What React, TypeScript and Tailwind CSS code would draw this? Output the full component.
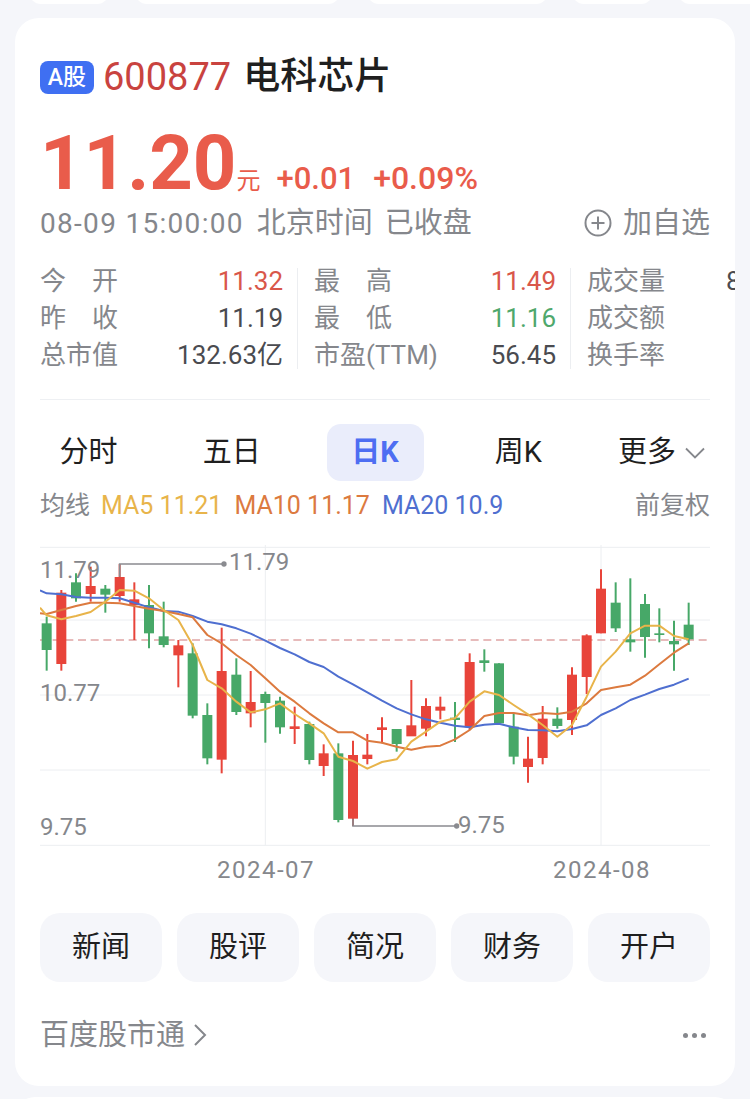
import React from 'react';

const FONT = 'font-[Roboto,"Noto_Sans_CJK_SC",sans-serif]';

type Candle = [number, number, number, number, number, 'r' | 'g'];

// coordinates are 3x chart pixels, x = (px - 20) * 3, y = (py - 530) * 3
const candles: Candle[] = [
    [80, 260, 422, 280, 360, 'g'],
    [124, 180, 422, 188, 402, 'r'],
    [168, 130, 215, 157, 205, 'g'],
    [212, 110, 215, 168, 192, 'r'],
    [256, 165, 248, 176, 194, 'g'],
    [299, 102, 215, 141, 198, 'r'],
    [343, 157, 330, 208, 225, 'r'],
    [387, 165, 355, 225, 310, 'g'],
    [431, 215, 352, 319, 345, 'g'],
    [475, 330, 472, 346, 376, 'r'],
    [518, 340, 565, 370, 557, 'g'],
    [562, 520, 703, 555, 685, 'g'],
    [605, 293, 730, 423, 689, 'r'],
    [649, 385, 555, 434, 546, 'g'],
    [692, 423, 592, 516, 550, 'r'],
    [736, 485, 638, 492, 519, 'g'],
    [780, 500, 611, 512, 592, 'g'],
    [824, 530, 642, 589, 597, 'r'],
    [868, 575, 703, 582, 690, 'g'],
    [911, 643, 738, 670, 708, 'r'],
    [955, 640, 877, 670, 870, 'g'],
    [999, 632, 888, 675, 866, 'r'],
    [1042, 612, 703, 674, 687, 'r'],
    [1086, 562, 640, 592, 600, 'r'],
    [1130, 597, 665, 597, 642, 'g'],
    [1174, 450, 618, 586, 619, 'r'],
    [1218, 505, 619, 528, 596, 'r'],
    [1261, 500, 568, 530, 542, 'r'],
    [1305, 516, 636, 563, 570, 'g'],
    [1349, 370, 600, 396, 592, 'r'],
    [1393, 358, 425, 391, 399, 'g'],
    [1437, 400, 585, 400, 580, 'g'],
    [1481, 552, 703, 590, 680, 'g'],
    [1524, 620, 758, 686, 711, 'r'],
    [1568, 528, 703, 566, 684, 'r'],
    [1612, 532, 596, 566, 588, 'g'],
    [1656, 412, 615, 434, 570, 'r'],
    [1700, 313, 492, 316, 441, 'r'],
    [1743, 118, 310, 176, 310, 'r'],
    [1787, 157, 306, 218, 295, 'g'],
    [1831, 145, 365, 328, 337, 'g'],
    [1875, 192, 383, 222, 321, 'g'],
    [1918, 235, 337, 310, 315, 'g'],
    [1962, 272, 422, 333, 343, 'g'],
    [2006, 218, 345, 284, 328, 'g'],
];

const ma20 = '60,181 80,190 124,193 168,201 212,203 256,203 299,205 343,218 387,232 431,243 475,245 518,258 562,275 605,283 649,295 692,311 736,332 780,354 824,373 868,396 911,411 955,440 999,463 1042,487 1086,512 1130,535 1174,553 1218,568 1261,578 1305,587 1349,592 1393,584 1437,581 1481,592 1524,600 1568,601 1612,604 1656,597 1700,586 1743,555 1787,535 1831,510 1875,494 1918,477 1962,464 2006,446';
const ma10 = '60,250 80,252 124,240 168,228 212,218 256,218 299,220 343,228 387,236 431,243 475,252 518,262 562,315 605,340 649,375 692,405 736,445 780,485 824,515 868,550 911,580 955,607 999,607 1042,632 1086,638 1130,650 1174,659 1218,650 1261,647 1305,628 1349,600 1393,558 1437,549 1481,549 1524,556 1568,549 1612,552 1656,545 1700,520 1743,480 1787,472 1831,464 1875,437 1918,403 1962,368 2006,340';
const ma5 = '60,233 80,256 124,268 168,258 212,246 256,215 299,180 343,182 387,205 431,240 475,270 518,345 562,450 605,475 649,515 692,547 736,538 780,520 824,552 868,580 911,610 955,680 999,693 1042,716 1086,696 1130,688 1174,635 1218,605 1261,575 1305,565 1349,515 1393,484 1437,495 1481,525 1524,553 1568,585 1612,620 1656,585 1700,500 1743,410 1787,365 1831,310 1875,287 1918,287 1962,318 2006,328';

const col1 = [
    { label: ['今', '开'], value: '11.32', color: 'text-[#d9574a]' },
    { label: ['昨', '收'], value: '11.19', color: 'text-[#4a4b50]' },
    { label: ['总市值'], value: '132.63亿', color: 'text-[#4a4b50]' },
];
const col2 = [
    { label: ['最', '高'], value: '11.49', color: 'text-[#d9574a]' },
    { label: ['最', '低'], value: '11.16', color: 'text-[#4fa86c]' },
    { label: ['市盈(TTM)'], value: '56.45', color: 'text-[#4a4b50]' },
];

const StatLabel: React.FC<{ parts: string[] }> = ({ parts }) => (
    <span className="flex justify-between min-w-[78px] text-[#85878c]">
        {parts.map(p => <span key={p}>{p}</span>)}
    </span>
);

const StatRow: React.FC<{ row: typeof col1[number] }> = ({ row }) => (
    <div className="flex justify-between">
        <StatLabel parts={row.label} />
        <span className={row.color}>{row.value}</span>
    </div>
);

const KChart: React.FC = () => (
    <div className="relative mt-[24px] h-[339px]">
        <svg className="block" width="670" height="303" viewBox="60 45 2010 909" fill="none">
            {[52, 270, 495, 720, 946].map(y => (
                <line key={y} x1="60" x2="2070" y1={y} y2={y} stroke="#eceef1" strokeWidth="3" />
            ))}
            {[736, 1743].map(x => (
                <line key={x} x1={x} x2={x} y1="45" y2="946" stroke="#eceef1" strokeWidth="3" />
            ))}
            <line x1="60" x2="2070" y1="330" y2="330" stroke="#dfa5a5" strokeWidth="4" strokeDasharray="24 14" />
            {candles.map(([x, wt, wb, bt, bb, c]) => (
                <g key={x} fill={c === 'r' ? '#e8443a' : '#47a868'} stroke={c === 'r' ? '#e8443a' : '#47a868'}>
                    <line x1={x} x2={x} y1={wt} y2={wb} strokeWidth="6" />
                    <rect x={x - 15} y={bt} width="30" height={bb - bt} stroke="none" />
                </g>
            ))}
            <polyline points={ma20} stroke="#4f6fd0" strokeWidth="6" strokeLinejoin="round" />
            <polyline points={ma10} stroke="#dc7a3f" strokeWidth="6" strokeLinejoin="round" />
            <polyline points={ma5} stroke="#e8b44a" strokeWidth="6" strokeLinejoin="round" />
            <polyline points="299,140 299,102 612,102" stroke="#8a8b90" strokeWidth="5" />
            <circle cx="612" cy="102" r="8" fill="#8a8b90" />
            <polyline points="999,866 999,888 1310,888" stroke="#8a8b90" strokeWidth="5" />
            <circle cx="1310" cy="888" r="8" fill="#8a8b90" />
        </svg>
        <span className="absolute left-0 top-[10px] text-[24px] leading-[30px] text-[#85878c]">11.79</span>
        <span className="absolute left-0 top-[133px] text-[24px] leading-[30px] text-[#85878c]">10.77</span>
        <span className="absolute left-0 top-[267px] text-[24px] leading-[30px] text-[#85878c]">9.75</span>
        <span className="absolute left-[189px] top-[2px] text-[24px] leading-[30px] text-[#85878c]">11.79</span>
        <span className="absolute left-[418px] top-[265px] text-[24px] leading-[30px] text-[#85878c]">9.75</span>
        <span className="absolute left-[177px] top-[311px] text-[24px] leading-[28px] tracking-[1.5px] text-[#85878c]">2024-07</span>
        <span className="absolute left-[513px] top-[311px] text-[24px] leading-[28px] tracking-[1.5px] text-[#85878c]">2024-08</span>
    </div>
);

const App: React.FC = () => {
    return (
        <div className={`w-[750px] h-[1099px] overflow-hidden bg-[#f5f6fa] ${FONT}`}>
            <div className="flex items-end h-[4px]">
                <div className="ml-[29px] w-[80px] h-[14px] shrink-0 bg-white rounded-b-[12px]" />
                <div className="ml-[26px] w-[205px] h-[14px] shrink-0 bg-white rounded-b-[12px]" />
                <div className="ml-[27px] w-[181px] h-[14px] shrink-0 bg-white rounded-b-[12px]" />
                <div className="ml-[24px] w-[81px] h-[14px] shrink-0 bg-white rounded-b-[12px]" />
                <div className="ml-[25px] flex-1 h-[14px] bg-white rounded-bl-[12px]" />
            </div>

            <div className="mt-[14px] mx-[15px] h-[1068px] bg-white rounded-[24px] overflow-hidden px-[25px] pt-[39px]">
                <div className="flex items-center h-[40px] whitespace-nowrap">
                    <span className="flex items-center justify-center w-[54px] h-[33px] rounded-[8px] bg-[#3f6ff2] text-white text-[23px] font-medium leading-none">A股</span>
                    <span className="ml-[9px] text-[38px] leading-[40px] text-[#c9433f]">600877</span>
                    <span className="ml-[12px] text-[37px] leading-[40px] font-medium text-[#1f1f1f]">电科芯片</span>
                </div>

                <div className="mt-[29px] flex items-baseline h-[74px] whitespace-nowrap text-[#e95c4b]">
                    <span className="text-[76px] leading-[74px] font-bold">11.20</span>
                    <span className="text-[24px] leading-[28px]">元</span>
                    <span className="ml-[16px] text-[31px] leading-[34px] font-medium">+0.01</span>
                    <span className="ml-[18px] text-[32px] leading-[34px] font-medium">+0.09%</span>
                </div>

                <div className="mt-[3px] flex items-center justify-between h-[40px] text-[29px] leading-[40px] text-[#85878c] whitespace-nowrap">
                    <div>
                        <span className="text-[28px] tracking-[1.3px]">08-09 15:00:00</span>
                        <span className="ml-[13px]">北京时间</span>
                        <span className="ml-[12px]">已收盘</span>
                    </div>
                    <div className="flex items-center">
                        <svg width="28" height="28" viewBox="0 0 28 28" fill="none" stroke="#85878c" strokeWidth="2">
                            <circle cx="14" cy="14" r="12.5" />
                            <path d="M14 7.5v13M7.5 14h13" />
                        </svg>
                        <span className="ml-[11px]">加自选</span>
                    </div>
                </div>

                <div className="mt-[20px] flex text-[26px] leading-[37px] whitespace-nowrap">
                    <div className="w-[243px] shrink-0">
                        {col1.map(row => <StatRow key={row.value} row={row} />)}
                    </div>
                    <div className="ml-[14px] mr-[16px] my-[5px] w-px shrink-0 bg-[#eceef1]" />
                    <div className="w-[242px] shrink-0">
                        {col2.map(row => <StatRow key={row.value} row={row} />)}
                    </div>
                    <div className="ml-[14px] mr-[16px] my-[5px] w-px shrink-0 bg-[#eceef1]" />
                    <div className="w-[243px] shrink-0">
                        <div className="flex justify-between">
                            <StatLabel parts={['成交量']} />
                            <span className="w-[104px] text-[#4a4b50]">8</span>
                        </div>
                        <StatLabel parts={['成交额']} />
                        <StatLabel parts={['换手率']} />
                    </div>
                </div>

                <div className="mt-[25px] h-px bg-[#eef0f3]" />

                <div className="mt-[24px] flex justify-between text-[29px] text-[#1f1f1f] whitespace-nowrap">
                    <div className="flex items-center justify-center w-[97px] h-[57px]">分时</div>
                    <div className="flex items-center justify-center w-[97px] h-[57px]">五日</div>
                    <div className="flex items-center justify-center w-[97px] h-[57px] rounded-[14px] bg-[#eaedfb] font-bold text-[#4e6ef2]">日K</div>
                    <div className="flex items-center justify-center w-[97px] h-[57px]">周K</div>
                    <div className="flex items-center justify-center w-[97px] h-[57px]">
                        更多
                        <svg className="ml-[9px]" width="20" height="12" viewBox="0 0 20 12" fill="none" stroke="#85878c" strokeWidth="1.8">
                            <path d="M1 1.5l9 9 9-9" />
                        </svg>
                    </div>
                </div>

                <div className="mt-[10px] flex items-center h-[30px] text-[25px] leading-[30px] whitespace-nowrap">
                    <span className="text-[#85878c]">均线</span>
                    <span className="ml-[11px] text-[#e8b44a]">MA5 11.21</span>
                    <span className="ml-[12px] text-[#dc7a3f]">MA10 11.17</span>
                    <span className="ml-[12px] text-[#4f6fd0]">MA20 10.9</span>
                    <span className="ml-auto text-[#85878c]">前复权</span>
                </div>

                <KChart />

                <div className="mt-[29px] flex gap-[15px]">
                    {['新闻', '股评', '简况', '财务', '开户'].map(t => (
                        <div key={t} className="flex-1 flex items-center justify-center h-[69px] rounded-[20px] bg-[#f5f6fa] text-[29px] text-[#1f1f1f]">{t}</div>
                    ))}
                </div>

                <div className="mt-[33px] flex items-center justify-between h-[40px] text-[#85878c]">
                    <div className="flex items-center">
                        <span className="text-[29px] leading-[40px]">百度股市通</span>
                        <svg className="ml-[8px]" width="14" height="24" viewBox="0 0 14 24" fill="none" stroke="#85878c" strokeWidth="2">
                            <path d="M2 2l10 10L2 22" />
                        </svg>
                    </div>
                    <div className="flex gap-[4px] mr-[4px]">
                        <span className="w-[5px] h-[5px] rounded-full bg-[#85878c]" />
                        <span className="w-[5px] h-[5px] rounded-full bg-[#85878c]" />
                        <span className="w-[5px] h-[5px] rounded-full bg-[#85878c]" />
                    </div>
                </div>
            </div>

            <div className="mt-[11px] mx-[15px] h-[20px] bg-white rounded-t-[24px]" />
        </div>
    );
};

export default App;
